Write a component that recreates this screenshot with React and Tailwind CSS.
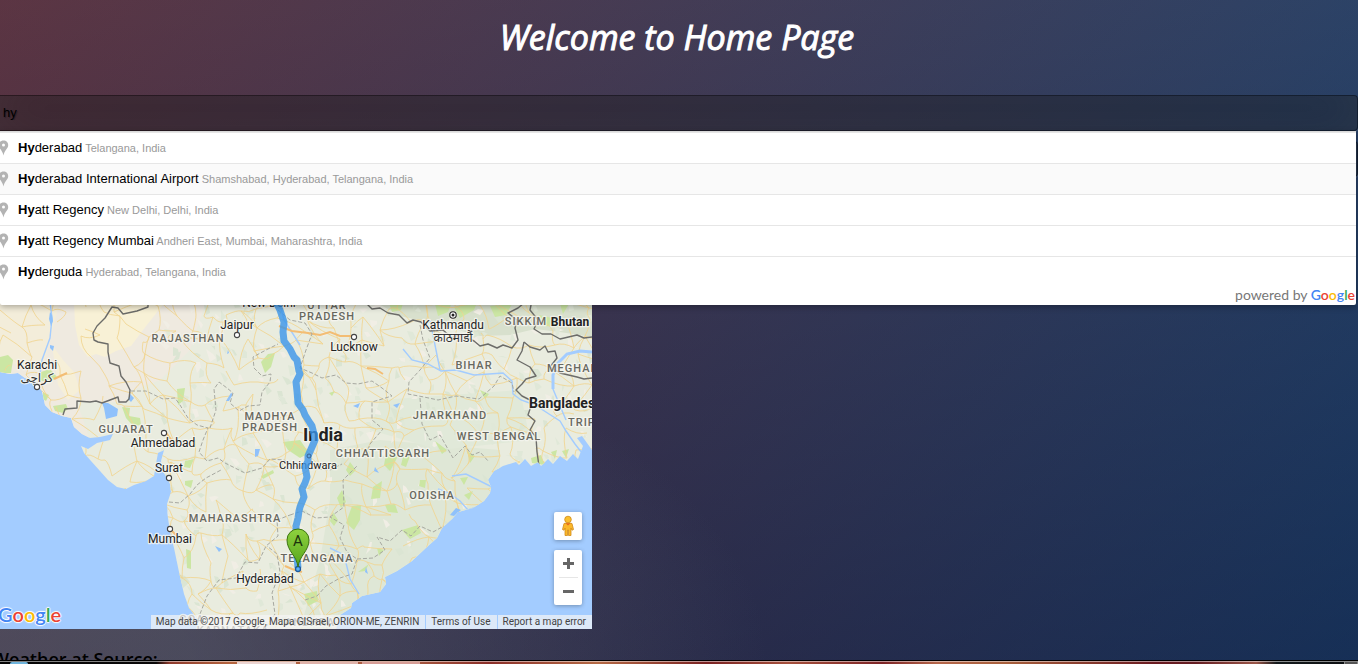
import React from "react";

const suggestions = [
  { match: "Hy", rest: "derabad", area: "Telangana, India" },
  { match: "Hy", rest: "derabad International Airport", area: "Shamshabad, Hyderabad, Telangana, India", active: true },
  { match: "Hy", rest: "att Regency", area: "New Delhi, Delhi, India" },
  { match: "Hy", rest: "att Regency Mumbai", area: "Andheri East, Mumbai, Maharashtra, India" },
  { match: "Hy", rest: "derguda", area: "Hyderabad, Telangana, India" },
];

const LAND =
  "M0 220V372L10 374L18 373L25 378L31 380L38 386L42 391L45 405L52 412L62 416L71 418L74 427L82 434L90 438L100 437L113 434L110 440L97 443L88 449L81 446L84 453L91 461L100 471L108 480L117 487L126 489L134 485L146 481L154 476L156 464L158 453L164 450L161 461L163 471L170 484L171 492L167 504L168 518L170 532L174 548L179 572L184 594L189 608L196 617L200 630H336L340 615L351 608L352 603L362 596L380 592L386 584L385 577L397 571L412 561L428 546L437 538L442 528L452 519L458 512L473 508L484 501L490 493L491 487L488 480L494 471L503 466L516 462L519 465L525 459L531 466L538 462L541 466L548 459L553 464L560 456L567 461L573 454L578 459L583 446L577 438L582 436L592 450V220Z";

const BORDERS = [
  "M148 300V307L137 311L123 314L118 308L112 307L105 318L97 326L93 333L94 340L98 342L108 344L108 352L110 363L119 366L121 376L126 382L130 390L129 399L126 402L119 402L118 397L102 403L96 401L90 402L77 401L77 408L65 409L63 415",
  "M366 303L372 309L380 308L388 313L399 315L407 323L413 320L421 322L430 331L443 330L452 338L460 334L474 341L480 346L488 344L497 348L503 345L512 348L518 340L515 328L517 320L508 313L518 308L524 303",
  "M532 300L530 310L538 320L534 329L542 334L551 334L560 339L577 335L584 338L592 337",
  "M524 342L530 347L540 350L545 346L548 352L555 351L557 358L550 367L560 373L577 377L584 379L592 378",
  "M524 342L522 351L517 360L530 367L536 376L526 379L522 384L516 390L522 396L530 400L530 409L528 415L535 421L530 430L536 437L537 452L539 466",
];

const STATES = [
  "M131 391L146 391L163 399L175 398L180 405L188 418L197 425L208 428L203 440L199 452L207 461L218 458L225 463L245 473L262 468L270 459L284 460L296 467L330 470L342 464",
  "M210 428L216 410L214 389L219 382L227 388L233 393L230 403L239 411L248 406L260 405L262 392L270 382L271 374L262 376L254 368L253 357L266 350L278 344",
  "M278 310L290 320L305 323L312 334L306 350L300 368L312 373L322 378L336 375L346 383L358 384L372 381L382 388L392 396L372 402L372 420L383 429L370 444L366 456",
  "M420 325L423 340L430 358L420 370L409 382L408 394L424 397L438 400L456 396L479 399L494 386L500 376L512 383L514 392",
  "M420 398L422 424L430 440L440 435L453 458L465 446L472 455L480 452L489 462",
  "M169 502L180 503L190 494L197 485L206 478L221 470",
  "M290 515L302 511L316 518L330 517L344 507L343 480L357 466",
  "M200 614L207 596L219 580L236 578L245 562L258 563L266 546L278 536L277 520L290 515",
  "M266 627L275 614L272 593L280 572L277 554L267 546",
  "M305 600L317 596L326 586L340 578L352 574L357 559L347 552L340 538L344 525L330 517",
  "M357 559L373 558L385 550L377 537L390 541L402 530L411 536L420 526L433 532L444 526",
];

const GREENS = [
  "M0 357L8 355L13 360L11 373H0Z", "M41 372L50 369L57 377L49 383L40 380Z", "M43 392L49 395L46 401L43 399Z",
  "M53 406L66 404L68 409L63 413L55 411Z", "M122 407L130 408L129 416L140 418L141 425L133 426L126 418Z",
  "M261 362L268 354L275 353L271 367L265 373Z", "M177 389L185 388L183 401L178 405Z",
  "M283 442L300 440L309 453L300 458L288 450Z", "M329 393L335 391L332 396Z",
  "M185 461L194 459L190 468L184 467Z", "M185 481L193 480L191 488L185 485Z", "M261 476L273 470L274 473L263 479Z",
  "M186 549L191 551L191 569L187 568Z", "M386 454L394 451L397 458L390 471L384 465Z",
  "M350 462L356 470L350 476L346 470Z", "M342 490L346 502L341 508L337 498Z", "M352 506L361 505L360 520L354 530L346 523Z",
  "M333 512L338 520L334 526L330 521Z", "M373 487L382 481L380 498L371 499Z", "M385 505L395 504L398 513L388 512Z",
  "M420 480L426 480L425 488L419 486Z", "M460 478L468 477L464 485Z", "M464 495L473 491L469 500Z",
  "M402 530L418 525L421 533L410 539Z", "M377 548L384 550L379 556Z", "M304 594L317 591L318 601L308 606Z",
  "M358 572L369 564L365 571Z", "M388 300H404L401 310L392 312Z", "M434 300H453L448 312L438 316Z", "M454 307L478 300L474 310L460 318Z",
  "M490 306L512 304L506 315L495 317Z", "M539 315L552 318L560 327L545 326Z", "M560 304L570 302L563 314Z",
  "M480 390L489 394L485 399Z", "M531 458L541 455L545 465L532 463Z", "M551 452L557 450L555 459Z", "M562 451L569 449L566 458Z",
  "M435 441L447 450L442 454Z", "M467 451L475 456L470 463Z", "M403 457L410 456L406 467L401 465Z",
];

const LAKES = [
  "M102 403L108 403L118 409L117 416L106 419L104 408Z", "M130 394L134 398L131 402L128 399Z", "M50 345L54 346L53 351L50 348Z",
  "M50 312L52 315L53 321L51 326L49 319Z", "M226 401L231 393L233 394L229 401Z", "M255 449L260 449L258 456L255 457Z",
  "M353 406L360 403L358 408Z", "M393 405L400 403L397 408Z", "M215 546L222 549L219 552Z", "M228 350L229 353L227 354Z", "M375 467L379 473L374 471Z",
  "M450 515L456 508L461 510L454 516Z", "M366 567L368 574L365 572Z",
];

const RIVERS = [
  "M403 349L412 360L428 364L441 371L456 370L474 375L489 374L503 373L512 381L513 394L521 400L535 405L549 414L560 421L566 431L575 444L582 453",
  "M592 352L580 351L567 354L558 363L553 375L553 389L558 401L566 420",
  "M430 320L436 350L440 370", "M280 305L284 320L300 345", "M50 302L52 318L50 338L42 360L39 382",
  "M492 487L478 480L466 474L452 476", "M480 506L468 510L460 501L449 493L438 489", "M359 594L350 579L344 555L330 548",
];

const ORANGE = [
  "M279 326L292 331L308 333L320 335L330 332L340 336L352 336", "M367 368L375 369L383 374", "M54 379L67 373",
  "M165 431L169 437L175 444", "M171 530L178 537", "M285 566L292 569L302 572",
];

const places = [
  { t: "Jaipur", x: 237, y: 329, dot: [237, 335] },
  { t: "Lucknow", x: 354, y: 351, dot: [354, 337] },
  { t: "Karachi", x: 37, y: 369, dot: [37, 387] },
  { t: "Ahmedabad", x: 163, y: 447, dot: [164, 433] },
  { t: "Surat", x: 169, y: 472, dot: [169, 478] },
  { t: "Mumbai", x: 170, y: 543, dot: [170, 529] },
  { t: "Chhindwara", x: 308, y: 469, size: 11 },
  { t: "Hyderabad", x: 265, y: 583 },
  { t: "Kathmandu", x: 453, y: 329 },
  { t: "New Delhi", x: 269, y: 307 },
];

const regions = [
  { t: "RAJASTHAN", x: 188, y: 342 }, { t: "UTTAR", x: 327, y: 309 }, { t: "PRADESH", x: 327, y: 320 },
  { t: "SIKKIM", x: 526, y: 325 }, { t: "BIHAR", x: 474, y: 369 }, { t: "MEGHALAYA", x: 547, y: 372, anchor: "start" },
  { t: "GUJARAT", x: 126, y: 433 }, { t: "MADHYA", x: 270, y: 420 }, { t: "PRADESH", x: 270, y: 431 },
  { t: "JHARKHAND", x: 450, y: 419 }, { t: "WEST BENGAL", x: 499, y: 440 }, { t: "CHHATTISGARH", x: 383, y: 457 },
  { t: "ODISHA", x: 432, y: 499 }, { t: "MAHARASHTRA", x: 235, y: 522 }, { t: "TELANGANA", x: 317, y: 562 },
  { t: "TRIPURA", x: 568, y: 426, anchor: "start" }, { t: "GOA", x: 192, y: 623 }, { t: "KARNATAKA", x: 233, y: 634 }, { t: "ANDHRA", x: 310, y: 626 },
];

// Deterministic web of minor roads and terrain patches.
function buildTerrain() {
  let seed = 17;
  const rnd = () => {
    seed = (seed * 16807) % 2147483647;
    return seed / 2147483647;
  };
  const step = 18;
  const cols = 36;
  const rows = 23;
  const pt = [];
  for (let r = 0; r < rows; r++) {
    for (let c = 0; c < cols; c++) {
      pt.push([Math.round(c * step - 10 + (rnd() - 0.5) * 18), Math.round(235 + r * step + (rnd() - 0.5) * 18)]);
    }
  }
  let roads = "";
  const link = (a, b) => {
    if (a[0] < 120 && rnd() < 0.45) return;
    const mx = Math.round((a[0] + b[0]) / 2 + (rnd() - 0.5) * 10);
    const my = Math.round((a[1] + b[1]) / 2 + (rnd() - 0.5) * 10);
    roads += `M${a[0]} ${a[1]}Q${mx} ${my} ${b[0]} ${b[1]}`;
  };
  for (let r = 0; r < rows - 1; r++) {
    for (let c = 0; c < cols - 1; c++) {
      const i = r * cols + c;
      if (rnd() < 0.7) link(pt[i], pt[i + 1]);
      if (rnd() < 0.7) link(pt[i], pt[i + cols]);
      if (rnd() < 0.25) link(pt[i], pt[i + cols + 1]);
    }
  }
  const patches = ["", "", ""];
  for (let k = 0; k < 480; k++) {
    const x = Math.round(150 + rnd() * 442);
    const y = Math.round(300 + rnd() * 330);
    const s = 2 + rnd() * 6;
    const j = () => Math.round((rnd() - 0.5) * s);
    patches[k % 3] += `M${x} ${y}l${j() + 4} ${j() + 1}l${j() + 2} ${j() + 4}l${j() - 4} ${j() + 2}z`;
  }
  return { roads, patches };
}
const terrain = buildTerrain();

const ROUTE =
  "M275 300L280 310L284 322L283 332L284 341L290 349L294 357L297 360L299 371L300 374L296 382L297 391L298 403L303 410L305 415L310 423L312 426L314 434L315 440L312 447L308 456L308 461L305 467L307 477L305 483L302 489L304 497L300 507L299 511L298 518L296 526L296 545L298 568";

function IndiaMap() {
  return (
    <svg viewBox="0 229 592 400" className="block h-full w-full" role="img" aria-label="Route map of India">
      <defs>
        <clipPath id="land"><path d={LAND} /></clipPath>
        <linearGradient id="pin" x1="0" y1="0" x2="0" y2="1">
          <stop offset="0" stopColor="#8fd23f" />
          <stop offset="1" stopColor="#55a51c" />
        </linearGradient>
      </defs>
      <rect x="0" y="229" width="592" height="400" fill="#a3ccff" />
      <path d={LAND} fill="#e9ecdf" />
      <g clipPath="url(#land)">
        <path d="M0 229H230L190 350L160 380L131 391L126 402L77 402L90 440L60 420L0 380Z" fill="#efeae0" />
        <path d="M0 300H60L42 372L0 360Z" fill="#f3edda" />
        <path d="M74 300L112 304L165 302L143 330L131 346L116 351L105 357L96 354L88 357L79 345L75 325Z" fill="#f8f1d6" />
        <path d="M52 345L63 360L74 372L80 390L68 400L58 385Z" fill="#f6efd8" />
        <path d="M330 450L380 440L500 450L500 520L380 592L330 629H300L320 560L330 500Z" fill="#dfe7d6" />
        <path d="M380 400L520 390L530 440L440 450L370 430Z" fill="#e1e9d9" />
        <path d="M372 300H592V337L560 332L535 329L510 335L480 336L440 325L400 316Z" fill="#d8e0cd" />
        <path d={terrain.patches[0]} fill="#dbe5d3" />
        <path d={terrain.patches[1]} fill="#f1eee5" />
        <path d={terrain.patches[2]} fill="#e0e8d8" />
        {GREENS.map((d) => <path key={d} d={d} fill="#cbe6a3" />)}
        <path d={terrain.roads} fill="none" stroke="#f1d591" strokeOpacity="0.85" strokeWidth="1" />
        {RIVERS.map((d) => <path key={d} d={d} fill="none" stroke="#a3ccff" strokeWidth="1.4" />)}
        <path d="M592 352L580 351L567 354L558 363L553 375L553 389" fill="none" stroke="#a3ccff" strokeWidth="3" />
        {LAKES.map((d) => <path key={d} d={d} fill="#8fc1fb" />)}
        {ORANGE.map((d) => <path key={d} d={d} fill="none" stroke="#f3bd74" strokeWidth="2" />)}
        {STATES.map((d) => <path key={d} d={d} fill="none" stroke="#a7a8a0" strokeWidth="1" strokeDasharray="4 2" />)}
        {BORDERS.map((d) => <path key={d} d={d} fill="none" stroke="#6c6c69" strokeWidth="1.4" strokeLinejoin="round" />)}
      </g>

      <g fontFamily="Roboto, sans-serif" textAnchor="middle" stroke="#f7f7f2" strokeOpacity="0.8" strokeWidth="2.5" strokeLinejoin="round" style={{ paintOrder: "stroke" }}>
        {regions.map((r) => (
          <text key={r.t + r.y} x={r.x} y={r.y} fontSize="11" letterSpacing="1" fill="#68685f" fontWeight="500" textAnchor={r.anchor}>{r.t}</text>
        ))}
        {places.map((p) => (
          <text key={p.t} x={p.x} y={p.y} fontSize={p.size || 12} fill="#222">{p.t}</text>
        ))}
        <text x="37" y="382" fontSize="12" fontFamily="'DejaVu Sans', sans-serif" fill="#333">کراچی</text>
        <text x="453" y="342" fontSize="12" fontFamily="'Noto Sans', 'Noto Sans Devanagari', sans-serif" fill="#333">काठमाडौं</text>
        <text x="570" y="326" fontSize="12" fontWeight="700" fill="#222">Bhutan</text>
        <text x="529" y="408" fontSize="14" fontWeight="700" fill="#222" textAnchor="start">Bangladesh</text>
        <text x="323" y="441" fontSize="18" fontWeight="700" fill="#222">India</text>
      </g>
      {places.filter((p) => p.dot).map((p) => (
        <circle key={p.t} cx={p.dot[0]} cy={p.dot[1]} r="2.6" fill="#fff" stroke="#444" strokeWidth="1.1" />
      ))}
      <circle cx="453" cy="315" r="3.2" fill="#fff" stroke="#222" strokeWidth="1.1" />
      <circle cx="453" cy="315" r="1.5" fill="#222" />

      <path d={ROUTE} fill="none" stroke="#3a95ea" strokeOpacity="0.8" strokeWidth="7" strokeLinejoin="round" />
      <circle cx="309" cy="456" r="2" fill="none" stroke="#35618f" />
      <circle cx="298" cy="569" r="2.5" fill="#5db1f8" stroke="#1d5b9c" strokeWidth="1.3" />
      <path d="M298 567C297 556 287 551 287 540A11 11 0 0 1 309 540C309 551 299 556 298 567Z" fill="url(#pin)" stroke="#3b7411" strokeWidth="1" />
      <text x="298" y="546" fontSize="15" fontFamily="Roboto, sans-serif" textAnchor="middle" fill="#1c330c">A</text>
    </svg>
  );
}

function GoogleWord({ className }) {
  return (
    <span className={className}>
      <span className="text-[#4285f4]">G</span>
      <span className="text-[#ea4335]">o</span>
      <span className="text-[#fbbc05]">o</span>
      <span className="text-[#4285f4]">g</span>
      <span className="text-[#34a853]">l</span>
      <span className="text-[#ea4335]">e</span>
    </span>
  );
}

function PlacePin() {
  return (
    <svg viewBox="0 0 15 20" className="-ml-1 mr-[7px] h-5 w-[15px] shrink-0" aria-hidden="true">
      <path fillRule="evenodd" d="M7.500 2.500C4.700 2.500 2.800 4.600 2.800 7.200C2.800 10.500 6.500 12 7.500 17.500C8.500 12 12.200 10.500 12.200 7.200C12.200 4.600 10.300 2.500 7.500 2.500ZM7.500 5.500A1.500 1.500 0 1 1 7.500 8.500A1.500 1.500 0 0 1 7.500 5.500Z" fill="#b3b3b3" />
    </svg>
  );
}

function Suggestions() {
  return (
    <div className="absolute top-full right-0.5 left-0 z-10 rounded-b-xs border-t border-[#d9d9d9] bg-white font-['Liberation_Sans',Arial,sans-serif] shadow-[0_2px_6px_rgba(0,0,0,0.3)]">
      <ul>
        {suggestions.map((s) => (
          <li key={s.rest} className={s.active ? "border-t border-[#e6e6e6] bg-[#fafafa]" : "border-t border-[#e6e6e6]"}>
            <button type="button" className="flex h-[30px] w-full items-center overflow-hidden text-left text-[11px] whitespace-nowrap text-[#999]">
              <PlacePin />
              <span>
                <span className="text-[13px] text-black"><b>{s.match}</b>{s.rest}</span> {s.area}
              </span>
            </button>
          </li>
        ))}
      </ul>
      <div className="flex h-[18px] items-center justify-end pr-px pb-0.5 font-[Lato,sans-serif] text-sm leading-4 text-[#777]">
        powered by&nbsp;<GoogleWord className="font-semibold" />
      </div>
    </div>
  );
}

const field =
  "block h-9 w-full rounded-r-sm border border-l-0 border-black/30 bg-black/30 px-[3px] pb-px font-['Liberation_Sans',Arial,sans-serif] text-[13px] text-black outline-none [text-shadow:1px_1px_1px_rgba(0,0,0,0.3)] shadow-[inset_0_-5px_45px_rgba(100,100,100,0.2),0_1px_1px_rgba(255,255,255,0.2)]";

function MapPanel() {
  return (
    <section className="relative h-[400px] w-[592px] max-w-full overflow-hidden">
      <IndiaMap />
      <div className="absolute right-2.5 bottom-6 flex flex-col gap-2.5">
        <button type="button" aria-label="Street View" className="flex size-7 items-center justify-center rounded-xs bg-white shadow-[0_1px_4px_rgba(0,0,0,0.3)]">
          <svg viewBox="0 0 14 22" className="h-[22px] w-3.5" aria-hidden="true">
            <path d="M3 8.500Q7 7 11 8.500L12.500 14.500L11 15.200L10 13V20.500H7.500V15H6.500V20.500H4V13L3 15.200L1.500 14.500Z" fill="#fbb829" stroke="#d08a1b" strokeWidth="0.800" />
            <path d="M4.500 8.200L7 10.500L9.500 8.200Z" fill="#e8661b" />
            <circle cx="7" cy="4.500" r="3.300" fill="#fbc02d" stroke="#d08a1b" strokeWidth="0.800" />
          </svg>
        </button>
        <div className="flex w-7 flex-col items-center rounded-xs bg-white shadow-[0_1px_4px_rgba(0,0,0,0.3)]">
          <button type="button" aria-label="Zoom in" className="flex h-[27px] w-7 items-center justify-center">
            <svg viewBox="0 0 11 11" className="size-[11px]" aria-hidden="true"><path d="M4 0H7V4H11V7H7V11H4V7H0V4H4Z" fill="#666" /></svg>
          </button>
          <span className="h-px w-[19px] bg-[#e6e6e6]" />
          <button type="button" aria-label="Zoom out" className="flex h-[27px] w-7 items-center justify-center">
            <svg viewBox="0 0 11 11" className="size-[11px]" aria-hidden="true"><path d="M0 4H11V7H0Z" fill="#666" /></svg>
          </button>
        </div>
      </div>
      <a href="#google" aria-label="Google" className="absolute bottom-px -left-0.5 font-[Lato,sans-serif] text-xl leading-7 font-semibold [text-shadow:0_0_1px_#fff,1px_0_1px_#fff,-1px_0_1px_#fff,0_1px_1px_#fff,0_-1px_1px_#fff]">
        <GoogleWord />
      </a>
      <div className="absolute right-0 bottom-0 flex h-3.5 gap-px font-[Roboto,sans-serif] text-[10px] leading-[14px] whitespace-nowrap text-[#444]">
        <span className="bg-[#f5f5f5]/70 pr-1.5 pl-[5px]">Map data ©2017 Google, Mapa GISrael, ORION-ME, ZENRIN</span>
        <a href="#terms" className="bg-[#f5f5f5]/70 pr-1.5 pl-[5px]">Terms of Use</a>
        <a href="#report" className="bg-[#f5f5f5]/70 pr-1.5 pl-[5px]">Report a map error</a>
      </div>
    </section>
  );
}

function Taskbar() {
  return (
    <footer className="flex h-1 shrink-0 border-t border-black bg-[linear-gradient(90deg,#050505_0%,#0a0808_11.500%,#8e3a2c_12.500%,#b5653f_17%,#a85a40_30%,#8a2e28_36%,#b56a45_44%,#7a2222_52%,#a5503c_58%,#7d2426_65%,#b5664a_69%,#a8603c_74%,#6a1a20_85%,#641d22_88%,#9a5648_92.500%,#141a1c_94%,#0c0e10_100%)]">
      <div className="flex flex-1 gap-1 border-t border-white/50 pl-2.5">
        <span className="mr-[205px] h-0.5 w-[18px] rounded-t-full bg-[#6fb4dc]" />
        <span className="h-0.5 w-[59px] bg-[#ecd5d2]" />
        <span className="h-0.5 w-[58px] bg-[#e0b3ab]" />
        <span className="h-0.5 w-[58px] bg-[#d79d96]" />
      </div>
      <span className="w-3.5 border border-b-0 border-[#888] bg-[#555]" />
    </footer>
  );
}

export default function App() {
  return (
    <div className="flex h-screen flex-col overflow-hidden">
      <main className="min-h-0 flex-1 overflow-hidden bg-[radial-gradient(ellipse_farthest-corner_at_0%_100%,rgba(104,128,138,0.4)_10%,rgba(138,114,76,0)_40%),linear-gradient(to_bottom,rgba(57,173,219,0.25)_0%,rgba(42,60,87,0.4)_100%),linear-gradient(135deg,#670d10_0%,#092756_100%)] font-['Open_Sans',sans-serif]">
        <h1 className="pt-4 pr-1 pb-9 text-center text-[34px] leading-[43px] font-medium text-white italic [-webkit-text-stroke:1px_white]">
          Welcome to Home Page
        </h1>
        <form className="flex flex-col gap-2.5" onSubmit={(e) => e.preventDefault()}>
          <div className="relative">
            <input aria-label="Source" className={field} type="text" defaultValue="hy" />
            <Suggestions />
          </div>
          <input aria-label="Destination" className={field} type="text" />
        </form>
        <div className="pt-[52px]">
          <MapPanel />
        </div>
        <h3 className="-ml-2 pt-4 text-lg leading-7 font-semibold text-black">Weather at Source:</h3>
      </main>
      <Taskbar />
    </div>
  );
}
